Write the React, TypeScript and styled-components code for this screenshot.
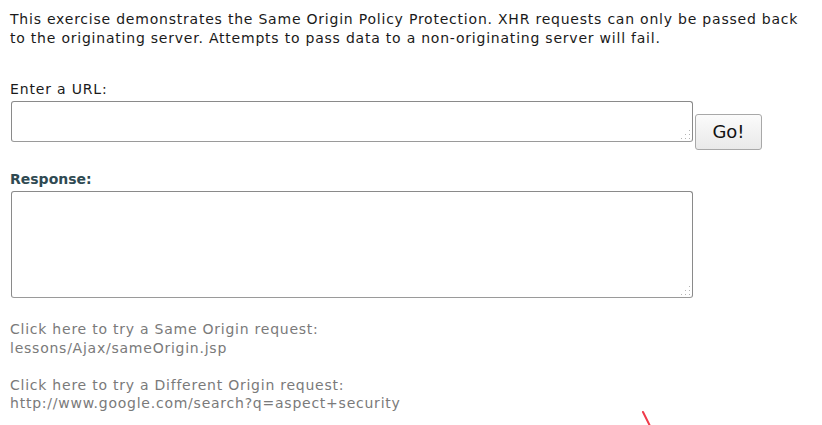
import React from "react";
import styled, { createGlobalStyle } from "styled-components";

const Global = createGlobalStyle`
  html, body { margin: 0; padding: 0; background: #fff; }
  body { font-family: "DejaVu Sans", "Liberation Sans", sans-serif; font-size: 14px; color: #000; }
`;

const Page = styled.div`
  position: relative;
  width: 822px;
  height: 425px;
  overflow: hidden;
  padding: 10px 10px 0 10px;
  box-sizing: border-box;
`;

const Intro = styled.p`
  margin: 0;
  line-height: 18.6px;
  letter-spacing: 0.78px;
  white-space: nowrap;
  color: #1a1a1a;
`;

const Label = styled.div<{ $bold?: boolean }>`
  margin-top: ${(p) => (p.$bold ? "20.6px" : "33px")};
  line-height: 18px;
  font-weight: ${(p) => (p.$bold ? 700 : 400)};
  letter-spacing: ${(p) => (p.$bold ? "0" : "0.83px")};
  color: ${(p) => (p.$bold ? "#2f4a52" : "#1a1a1a")};
`;

const Row = styled.div`
  display: flex;
  align-items: flex-start;
  gap: 2px;
  margin-top: 2.6px;
`;

const FieldWrap = styled.div<{ $h: number }>`
  position: relative;
  margin-left: 1px;
  width: 682px;
  height: ${(p) => p.$h}px;
  flex: none;
`;

const Field = styled.textarea`
  display: block;
  width: 100%;
  height: 100%;
  box-sizing: border-box;
  margin: 0;
  border: 1px solid #8a8a8a;
  border-bottom-color: #9a9a9a;
  border-radius: 3px;
  resize: none;
  background: #fff;
  font-family: "DejaVu Sans", sans-serif;
  font-size: 13px;
  outline: none;
`;

const Grip = styled.svg`
  position: absolute;
  right: 2px;
  bottom: 2px;
  width: 11px;
  height: 11px;
  pointer-events: none;
`;

const GoButton = styled.button`
  margin-top: 13px;
  width: 67px;
  height: 36px;
  box-sizing: border-box;
  border: 1px solid #a8a8a8;
  border-radius: 3px;
  background: linear-gradient(#fbfbfb, #e9e9e9);
  font-family: "DejaVu Sans", sans-serif;
  font-size: 18px;
  color: #111;
  padding: 0;
  flex: none;
`;

const Links = styled.div`
  margin-top: 22px;
  line-height: 18.6px;
  letter-spacing: 0.76px;
  color: #7a7a7a;
`;

const LinkLine = styled.div<{ $gap?: boolean }>`
  margin-top: ${(p) => (p.$gap ? "18.6px" : "0")};
`;

const Mark = styled.svg`
  position: absolute;
  left: 640px;
  top: 409px;
  width: 14px;
  height: 17px;
`;

function ResizeGrip() {
  const dots = [
    [9, 1], [9, 5], [9, 9],
    [5, 5], [5, 9],
    [1, 9],
  ];
  return (
    <Grip viewBox="0 0 11 11">
      {dots.map(([x, y], i) => (
        <rect key={i} x={x} y={y} width="1" height="1" fill="#b4b4b4" />
      ))}
    </Grip>
  );
}

export default function App() {
  return (
    <>
      <Global />
      <Page>
        <Intro>
          This exercise demonstrates the Same Origin Policy Protection. XHR requests can only be passed back
          <br />
          to the originating server. Attempts to pass data to a non-originating server will fail.
        </Intro>
        <Label>Enter a URL:</Label>
        <Row>
          <FieldWrap $h={41}>
            <Field />
            <ResizeGrip />
          </FieldWrap>
          <GoButton>Go!</GoButton>
        </Row>
        <Label $bold>Response:</Label>
        <Row>
          <FieldWrap $h={107}>
            <Field />
            <ResizeGrip />
          </FieldWrap>
        </Row>
        <Links>
          <LinkLine>Click here to try a Same Origin request:</LinkLine>
          <LinkLine>lessons/Ajax/sameOrigin.jsp</LinkLine>
          <LinkLine $gap>Click here to try a Different Origin request:</LinkLine>
          <LinkLine>http://www.google.com/search?q=aspect+security</LinkLine>
        </Links>
        <Mark viewBox="0 0 14 17">
          <path d="M3 3 L10 17" stroke="#f03a4a" strokeWidth="2" strokeLinecap="round" />
        </Mark>
      </Page>
    </>
  );
}
